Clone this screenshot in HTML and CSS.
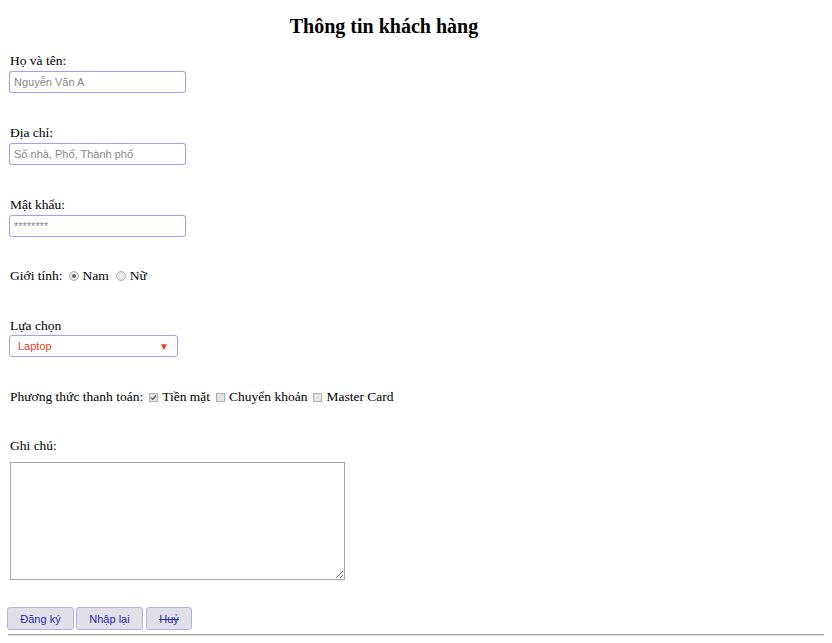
FILE: index.html
```html
<!DOCTYPE html>
<html lang="vi">
<head>
<meta charset="utf-8">
<title>Thông tin khách hàng</title>
<link rel="stylesheet" href="styles.css">
</head>
<body>
<form class="form">
  <h2 class="title">Thông tin khách hàng</h2>

  <div class="field f1">
    <label class="lbl">Họ và tên:</label>
    <input class="txt" type="text" placeholder="Nguyễn Văn A">
  </div>

  <div class="field f2">
    <label class="lbl">Địa chỉ:</label>
    <input class="txt" type="text" placeholder="Số nhà, Phố, Thành phố">
  </div>

  <div class="field f3">
    <label class="lbl">Mật khẩu:</label>
    <input class="txt" type="password" placeholder="********">
  </div>

  <div class="row f4">
    <span>Giới tính:</span>
    <span class="radio on"></span><span>Nam</span>
    <span class="radio"></span><span>Nữ</span>
  </div>

  <div class="field f5">
    <label class="lbl">Lựa chọn</label>
    <div class="select"><span>Laptop</span><span class="arrow">▼</span></div>
  </div>

  <div class="row f6">
    <span>Phương thức thanh toán:</span>
    <span class="check on"><svg viewBox="0 0 9 9" width="9" height="9"><path d="M2 4.6 L3.8 6.4 L7 2.4" fill="none" stroke="#555" stroke-width="1.3"/></svg></span><span>Tiền mặt</span>
    <span class="check"></span><span>Chuyển khoản</span>
    <span class="check"></span><span>Master Card</span>
  </div>

  <div class="field f7">
    <label class="lbl">Ghi chú:</label>
    <textarea class="note"></textarea>
  </div>

  <div class="buttons">
    <button type="button" class="btn">Đăng ký</button>
    <button type="button" class="btn">Nhập lại</button>
    <button type="button" class="btn strike">Huỷ</button>
  </div>
  <hr class="rule">
</form>
</body>
</html>
```
FILE: styles.css
```css
html, body {
  margin: 0;
  padding: 0;
  background: #fff;
}
body {
  padding: 0 8px;
  font-family: "Liberation Serif", "Times New Roman", serif;
  font-size: 13.5px;
  color: #000;
}
.form {
  display: flex;
  flex-direction: column;
  align-items: flex-start;
}
.title {
  align-self: stretch;
  width: 752px;
  margin: 14px 0 0 0;
  font-size: 20px;
  line-height: 24px;
  font-weight: bold;
  text-align: center;
}
.field {
  display: flex;
  flex-direction: column;
  align-items: flex-start;
}
.lbl {
  display: block;
  line-height: 18px;
  height: 18px;
  margin-left: 2px;
}
.f1 { margin-top: 14px; }
.f2 { margin-top: 31px; }
.f3 { margin-top: 31px; }
.f4 { margin-top: 30px; }
.f5 { margin-top: 32px; }
.f6 { margin-top: 31px; }
.f7 { margin-top: 31px; }
.txt {
  box-sizing: border-box;
  width: 177px;
  height: 22px;
  margin: 1px 0 0 1px;
  padding: 0 4px;
  border: 1px solid #a3a0f2;
  border-radius: 3px;
  box-shadow: 0 0 1px #c8c6f8;
  font-family: "Liberation Sans", Arial, sans-serif;
  font-size: 11px;
  color: #333;
  outline: none;
}
.txt::placeholder {
  color: #888;
}
.row {
  display: flex;
  align-items: center;
  height: 18px;
  margin-left: 2px;
}
.radio {
  box-sizing: border-box;
  width: 10px;
  height: 10px;
  border-radius: 50%;
  border: 1px solid #b4b4b4;
  background: radial-gradient(circle, #f2f2f2 0, #dcdcdc 100%);
  margin: 0 4px 0 6px;
  position: relative;
}
.radio.on::after {
  content: "";
  position: absolute;
  left: 2px;
  top: 2px;
  width: 4px;
  height: 4px;
  border-radius: 50%;
  background: #666;
}
.radio + span + .radio { margin-left: 7px; }
.check {
  box-sizing: border-box;
  width: 9px;
  height: 9px;
  border: 1px solid #b0b0b0;
  background: #e6e6e6;
  margin: 0 4px 0 6px;
  display: flex;
  align-items: center;
  justify-content: center;
}
.check svg {
  display: block;
  width: 9px;
  height: 9px;
  flex: none;
}
.select {
  box-sizing: border-box;
  width: 169px;
  height: 22px;
  margin: 0 0 0 1px;
  padding: 0 8px 0 8px;
  border: 1px solid #a3a0f2;
  border-radius: 3px;
  display: flex;
  align-items: center;
  justify-content: space-between;
  font-family: "Liberation Sans", Arial, sans-serif;
  font-size: 11px;
  color: #e8431c;
}
.arrow {
  font-size: 10px;
  color: #e8431c;
}
.note {
  box-sizing: border-box;
  width: 335px;
  height: 118px;
  margin: 7px 0 0 2px;
  border: 1px solid #a9a9a9;
  resize: both;
}
.buttons {
  display: flex;
  gap: 2px;
  margin: 27px 0 0 -1px;
}
.btn {
  box-sizing: border-box;
  height: 23px;
  padding: 0 12px;
  border: 1px solid #b3b0ef;
  border-radius: 3px;
  background: #e0e0e6;
  font-family: "Liberation Sans", Arial, sans-serif;
  font-size: 11px;
  color: #2b2bb0;
}
.btn:nth-child(1) { width: 67px; }
.btn:nth-child(2) { width: 67px; }
.btn:nth-child(3) { width: 46px; margin-left: 1px; }
.strike { text-decoration: line-through; }
.rule {
  align-self: stretch;
  margin: 4px 0 0 0;
  border: 0;
  border-top: 1px solid #a0a0a0;
  border-bottom: 1px solid #e0e0e0;
}
```
